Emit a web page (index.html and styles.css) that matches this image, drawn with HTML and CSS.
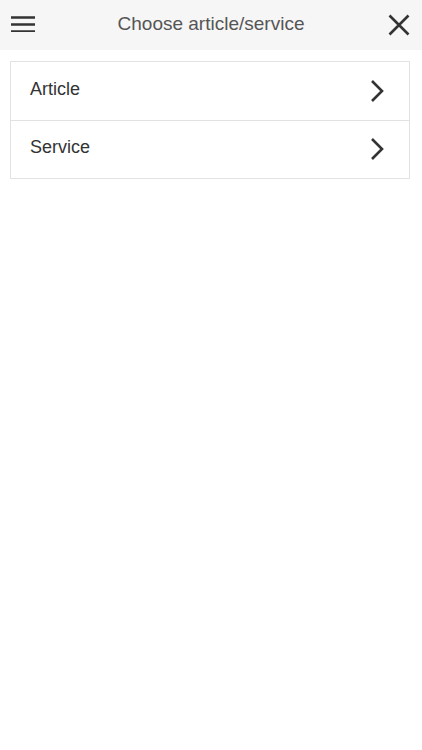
FILE: index.html
```html
<!DOCTYPE html>
<html>
  <head>
    <meta charset="UTF-8" />
    <meta name="viewport" content="width=device-width, initial-scale=1.0" />
    <title>Choose article/service</title>
    <link rel="stylesheet" href="styles.css">
  </head>

  <body>
    <header class="top-bar">
      <button class="icon-button menu-button" aria-label="Menu">
        <svg width="24" height="18" viewBox="0 0 24 18">
          <path d="M0 3.5h24M0 10.5h24M0 17.5h24" stroke="#333" stroke-width="2.6" fill="none" />
        </svg>
      </button>
      <h1 class="title">Choose article/service</h1>
      <button class="icon-button close-button" aria-label="Close">
        <svg width="22" height="22" viewBox="0 0 22 22">
          <path d="M1.5 1.5l19 19M20.5 1.5l-19 19" stroke="#333" stroke-width="2.6" fill="none" />
        </svg>
      </button>
    </header>

    <ul class="choice-list">
      <li class="choice-row">
        <span class="choice-label">Article</span>
        <svg class="chevron" width="14" height="24" viewBox="0 0 14 24">
          <path d="M2 2l10 10-10 10" stroke="#333" stroke-width="2.6" fill="none" />
        </svg>
      </li>
      <li class="choice-row">
        <span class="choice-label">Service</span>
        <svg class="chevron" width="14" height="24" viewBox="0 0 14 24">
          <path d="M2 2l10 10-10 10" stroke="#333" stroke-width="2.6" fill="none" />
        </svg>
      </li>
    </ul>
  </body>
</html>
```

FILE: styles.css
```css
body {
  font-family: "Liberation Sans", Arial, sans-serif;
  margin: 0;
  background-color: #fff;
  color: #333;
}

.top-bar {
  display: flex;
  align-items: center;
  justify-content: space-between;
  height: 50px;
  padding: 0 11px 0 11px;
  background-color: #f6f6f6;
}

.icon-button {
  background: none;
  border: none;
  padding: 0;
  margin: 0;
  cursor: pointer;
  display: flex;
  align-items: center;
  justify-content: center;
}

.menu-button {
  width: 24px;
  height: 34px;
  padding-bottom: 4px;
}

.close-button {
  width: 24px;
  height: 24px;
}

.title {
  flex: 1;
  margin: 0;
  padding-bottom: 2px;
  text-align: center;
  font-size: 19px;
  font-weight: normal;
  color: #555;
}

.choice-list {
  list-style: none;
  margin: 11px 0 0 10px;
  padding: 0;
  width: 398px;
  border: 1px solid #e2e2e2;
}

.choice-row {
  display: flex;
  align-items: center;
  justify-content: space-between;
  height: 57.5px;
  padding: 0 25px 0 19px;
}

.choice-row + .choice-row {
  border-top: 1px solid #e2e2e2;
}

.choice-label {
  font-size: 18px;
  color: #333;
  padding-bottom: 3px;
}
```
